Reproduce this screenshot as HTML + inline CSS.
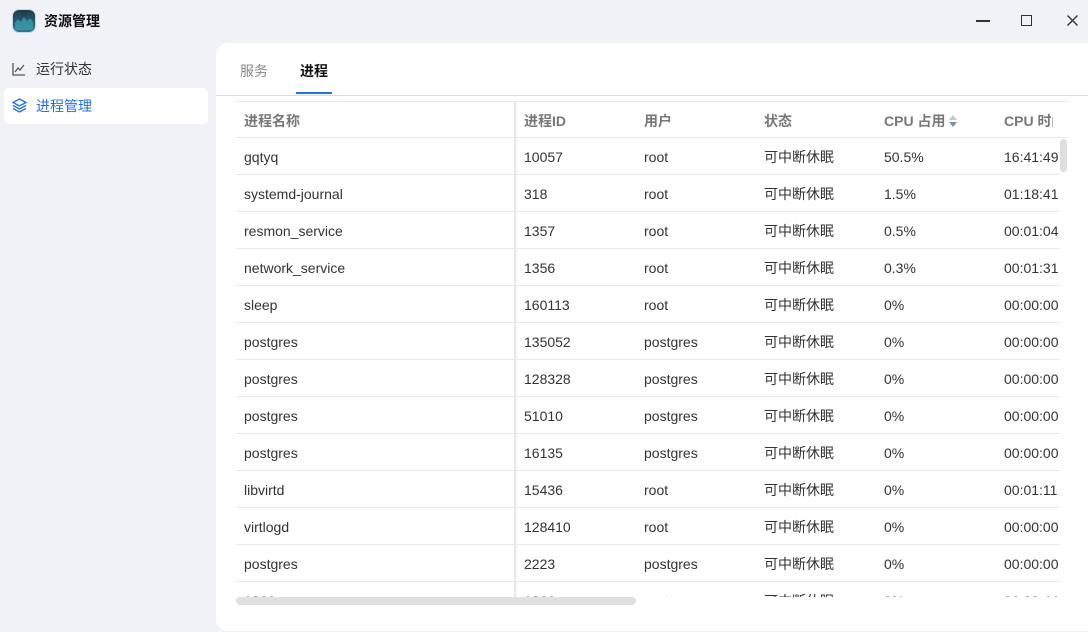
<!DOCTYPE html>
<html><head><meta charset="utf-8"><style>
*{margin:0;padding:0;box-sizing:border-box}
body{width:1088px;height:632px;overflow:hidden;background:#f1f2f5;font-family:"Liberation Sans","Noto Sans CJK SC",sans-serif;font-size:14px;color:#333;position:relative}
.abs{position:absolute}
.title{left:44px;top:11px;font-size:14px;font-weight:bold;color:#111}
.nav{left:4px;width:204px;height:36px;border-radius:6px;font-size:14px;padding-left:32px;line-height:36px}
.panel{left:216px;top:43px;width:872px;height:588px;background:#fff;border-radius:12px 0 0 12px;overflow:hidden}
.tab{top:18px;font-size:14px;line-height:20px}
.tbl{left:20px;top:58px;width:832px;height:496px;overflow:hidden}
.row{position:absolute;left:0;width:832px;height:37px;border-bottom:1px solid #e8e8e8;line-height:38px}
.row span{position:absolute;white-space:nowrap}
.hd{color:#777;font-weight:bold;border-top:1px solid #e8e8e8}
</style></head><body>
<div class="abs" style="left:13px;top:10px;width:22px;height:22px;border-radius:6px;background:linear-gradient(#1d3b4a,#2b7a8e);box-shadow:0 0 0 1px #c8d3ea"></div>
<svg class="abs" style="left:14px;top:13px" width="20" height="18"><path d="M1 10 L4 6 L7 9 L10 4 L13 8 L16 5 L19 9 L19 17 L1 17Z" fill="#3a9bb0" opacity=".8"/></svg>
<div class="abs title">资源管理</div>
<div class="abs" style="left:976px;top:20px;width:14px;height:1.5px;background:#333"></div>
<div class="abs" style="left:1021px;top:15px;width:11px;height:11px;border:1.5px solid #333"></div>
<svg class="abs" style="left:1067px;top:15px" width="11" height="11" stroke="#333" stroke-width="1.4"><path d="M0.5 0.5L10.5 10.5M10.5 0.5L0.5 10.5"/></svg>
<div class="abs nav" style="top:51px;color:#333">运行状态</div>
<svg class="abs" style="left:12px;top:62px" width="14" height="14" fill="none" stroke="#555" stroke-width="1.3"><path d="M1 1V13H13M3 10L6 6L8 8L12 3"/></svg>
<div class="abs nav" style="top:88px;background:#fff;color:#1f6ff2">进程管理</div>
<svg class="abs" style="left:12px;top:98px" width="15" height="15" fill="none" stroke="#1f6ff2" stroke-width="1.3"><path d="M7.5 1L14 4.5L7.5 8L1 4.5Z M1 7.5L7.5 11L14 7.5 M1 10.5L7.5 14L14 10.5"/></svg>
<div class="abs panel">
 <div class="abs tab" style="left:24px;color:#888">服务</div>
 <div class="abs tab" style="left:84px;color:#111;font-weight:bold">进程</div>
 <div class="abs" style="left:80px;top:49px;width:36px;height:2px;background:#1f6ff2"></div>
 <div class="abs" style="left:0;top:52px;width:872px;height:1px;background:#dcdcdc"></div>
 <div class="abs tbl">
  <div class="row hd" style="top:0"><span style="left:8px">进程名称</span><span style="left:288px">进程ID</span><span style="left:408px">用户</span><span style="left:528px">状态</span><span style="left:648px">CPU 占用</span><svg style="position:absolute;left:713px;top:13px" width="8" height="12"><path d="M4 0L8 5H0Z" fill="#c0c8d6"/><path d="M4 12L8 7H0Z" fill="#7f8fa8"/></svg><span style="left:768px">CPU 时间</span></div>
  <div class="row" style="top:37px"><span style="left:8px">gqtyq</span><span style="left:288px">10057</span><span style="left:408px">root</span><span style="left:528px">可中断休眠</span><span style="left:648px">50.5%</span><span style="left:768px">16:41:49</span></div>
  <div class="row" style="top:74px"><span style="left:8px">systemd-journal</span><span style="left:288px">318</span><span style="left:408px">root</span><span style="left:528px">可中断休眠</span><span style="left:648px">1.5%</span><span style="left:768px">01:18:41</span></div>
  <div class="row" style="top:111px"><span style="left:8px">resmon_service</span><span style="left:288px">1357</span><span style="left:408px">root</span><span style="left:528px">可中断休眠</span><span style="left:648px">0.5%</span><span style="left:768px">00:01:04</span></div>
  <div class="row" style="top:148px"><span style="left:8px">network_service</span><span style="left:288px">1356</span><span style="left:408px">root</span><span style="left:528px">可中断休眠</span><span style="left:648px">0.3%</span><span style="left:768px">00:01:31</span></div>
  <div class="row" style="top:185px"><span style="left:8px">sleep</span><span style="left:288px">160113</span><span style="left:408px">root</span><span style="left:528px">可中断休眠</span><span style="left:648px">0%</span><span style="left:768px">00:00:00</span></div>
  <div class="row" style="top:222px"><span style="left:8px">postgres</span><span style="left:288px">135052</span><span style="left:408px">postgres</span><span style="left:528px">可中断休眠</span><span style="left:648px">0%</span><span style="left:768px">00:00:00</span></div>
  <div class="row" style="top:259px"><span style="left:8px">postgres</span><span style="left:288px">128328</span><span style="left:408px">postgres</span><span style="left:528px">可中断休眠</span><span style="left:648px">0%</span><span style="left:768px">00:00:00</span></div>
  <div class="row" style="top:296px"><span style="left:8px">postgres</span><span style="left:288px">51010</span><span style="left:408px">postgres</span><span style="left:528px">可中断休眠</span><span style="left:648px">0%</span><span style="left:768px">00:00:00</span></div>
  <div class="row" style="top:333px"><span style="left:8px">postgres</span><span style="left:288px">16135</span><span style="left:408px">postgres</span><span style="left:528px">可中断休眠</span><span style="left:648px">0%</span><span style="left:768px">00:00:00</span></div>
  <div class="row" style="top:370px"><span style="left:8px">libvirtd</span><span style="left:288px">15436</span><span style="left:408px">root</span><span style="left:528px">可中断休眠</span><span style="left:648px">0%</span><span style="left:768px">00:01:11</span></div>
  <div class="row" style="top:407px"><span style="left:8px">virtlogd</span><span style="left:288px">128410</span><span style="left:408px">root</span><span style="left:528px">可中断休眠</span><span style="left:648px">0%</span><span style="left:768px">00:00:00</span></div>
  <div class="row" style="top:444px"><span style="left:8px">postgres</span><span style="left:288px">2223</span><span style="left:408px">postgres</span><span style="left:528px">可中断休眠</span><span style="left:648px">0%</span><span style="left:768px">00:00:00</span></div>
  <div class="row" style="top:481px"><span style="left:8px">1866</span><span style="left:288px">1866</span><span style="left:408px">root</span><span style="left:528px">可中断休眠</span><span style="left:648px">0%</span><span style="left:768px">00:00:44</span></div>
  <div class="abs" style="left:278px;top:0;width:3px;height:496px;background:linear-gradient(90deg,#e2e2e2,#f7f7f7)"></div>
  <div class="abs" style="left:817px;top:1px;width:15px;height:35px;background:#fff"></div>
  <div class="abs" style="left:824px;top:37px;width:8px;height:459px;background:#fff"></div>
  <div class="abs" style="left:824px;top:38px;width:7px;height:33px;border-radius:4px;background:#dedede"></div>
  <div class="abs" style="left:0;top:496px;width:832px;height:10px;background:#fff"></div>
 </div>
 <div class="abs" style="left:20px;top:554px;width:400px;height:8px;border-radius:4px;background:#dfe0e0"></div>
</div>
</body></html>
